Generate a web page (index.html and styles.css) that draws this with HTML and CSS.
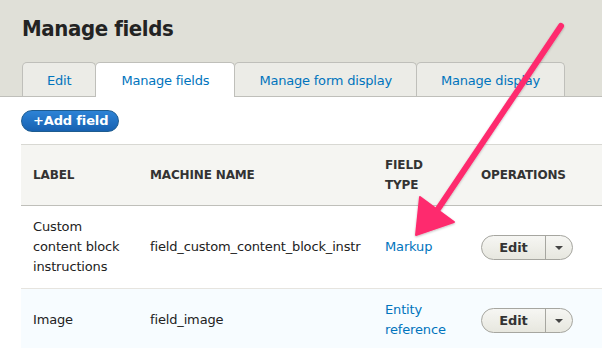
FILE: index.html
```html
<!DOCTYPE html>
<html lang="en">
<head>
    <meta charset="UTF-8">
    <meta name="viewport" content="width=device-width, initial-scale=1.0">
    <title>Manage fields</title>
    <link rel="stylesheet" href="styles.css">
</head>
<body>
    <div class="header">
        <h1>Manage fields</h1>
        <ul class="tabs">
            <li><a href="#">Edit</a></li>
            <li class="active"><a href="#">Manage fields</a></li>
            <li><a href="#">Manage form display</a></li>
            <li><a href="#">Manage display</a></li>
        </ul>
    </div>

    <div class="content">
        <a class="add-button" href="#">+Add field</a>

        <table class="fields">
            <colgroup>
                <col class="col-label">
                <col class="col-machine">
                <col class="col-type">
                <col class="col-ops">
            </colgroup>
            <thead>
                <tr>
                    <th>Label</th>
                    <th>Machine name</th>
                    <th>Field type</th>
                    <th>Operations</th>
                </tr>
            </thead>
            <tbody>
                <tr>
                    <td>Custom content block instructions</td>
                    <td class="nowrap">field_custom_content_block_instr</td>
                    <td><a href="#">Markup</a></td>
                    <td>
                        <div class="dropbutton">
                            <span class="drop-main">Edit</span>
                            <span class="drop-toggle"></span>
                        </div>
                    </td>
                </tr>
                <tr class="even">
                    <td>Image</td>
                    <td>field_image</td>
                    <td><a href="#">Entity reference</a></td>
                    <td>
                        <div class="dropbutton">
                            <span class="drop-main">Edit</span>
                            <span class="drop-toggle"></span>
                        </div>
                    </td>
                </tr>
            </tbody>
        </table>
    </div>

    <!-- annotation arrow -->
    <svg class="arrow" width="602" height="348" viewBox="0 0 602 348">
        <defs>
            <filter id="shadow" x="-20%" y="-20%" width="140%" height="140%">
                <feDropShadow dx="0" dy="1" stdDeviation="1" flood-color="#000" flood-opacity="0.25"/>
            </filter>
        </defs>
        <g filter="url(#shadow)" fill="#fe2c6e">
            <line x1="561" y1="26" x2="436" y2="212" stroke="#fe2c6e" stroke-width="6" stroke-linecap="round"/>
            <path d="M416 235 L420 197 L454 222 Z" stroke="#fe2c6e" stroke-width="2" stroke-linejoin="round"/>
        </g>
    </svg>
</body>
</html>
```

FILE: styles.css
```css
html, body {
    margin: 0;
    overflow: hidden;
}
body {
    font-family: "DejaVu Sans", "Lucida Grande", sans-serif;
    font-size: 13px;
    letter-spacing: -0.15px;
    color: #222;
    background: #fff;
    position: relative;
    width: 602px;
    height: 348px;
}
a {
    color: #0074bd;
    text-decoration: none;
}

.header {
    background: #e0e0d8;
    padding: 14px 0 0 22px;
    border-bottom: 1px solid #bfbfba;
}
.header h1 {
    margin: 0 0 18px;
    font-family: "DejaVu Sans Condensed", "Open Sans", sans-serif;
    font-size: 22px;
    line-height: 30px;
    font-weight: bold;
    color: #232323;
    letter-spacing: -0.4px;
}
.tabs {
    display: flex;
    list-style: none;
    margin: 0;
    padding: 0;
}
.tabs li {
    background: #ecece7;
    border: 1px solid #bfbfba;
    border-bottom: none;
    border-radius: 5px 5px 0 0;
    margin-right: -1px;
}
.tabs li a {
    display: block;
    height: 33px;
    line-height: 35px;
    padding: 0 24px;
    letter-spacing: -0.2px;
}
.tabs li.active {
    background: #fff;
    position: relative;
    z-index: 1;
    margin-bottom: -1px;
}
.tabs li.active a {
    height: 34px;
    padding: 0 25px;
}

.content {
    padding: 13px 0 0 21px;
}
.add-button {
    display: inline-block;
    height: 20px;
    line-height: 20px;
    padding: 0 10px 0 11px;
    border: 1px solid #1e5c90;
    border-radius: 11px;
    background: linear-gradient(#2d83d6, #1761b1);
    color: #fff;
    font-weight: bold;
    font-size: 13px;
}

.fields {
    margin-top: 12px;
    width: 581px;
    table-layout: fixed;
    border-collapse: collapse;
}
.col-label { width: 117px; }
.col-machine { width: 235px; }
.col-type { width: 96px; }
.col-ops { width: 133px; }
.fields th {
    background: #f5f5f2;
    border-top: 1px solid #d8d8d3;
    border-bottom: 1px solid #bfbfba;
    text-align: left;
    text-transform: uppercase;
    font-size: 12px;
    font-weight: bold;
    color: #333;
    line-height: 20px;
    padding: 10px 12px;
}
.fields td {
    padding: 11px 12px;
    line-height: 20px;
    border-bottom: 1px solid #e6e4df;
    vertical-align: middle;
}
.fields tr.even td {
    background: #f7fcff;
}
.nowrap {
    white-space: nowrap;
}

.dropbutton {
    display: flex;
    width: 90px;
    height: 23px;
    border: 1px solid #a6a6a0;
    border-radius: 13px;
    background: linear-gradient(#f6f6f3, #e7e7df);
    overflow: hidden;
}
.drop-main {
    flex: 1;
    text-align: center;
    font-weight: bold;
    line-height: 23px;
    color: #333;
}
.drop-toggle {
    width: 26px;
    border-left: 1px solid #a6a6a0;
    position: relative;
}
.drop-toggle::after {
    content: "";
    position: absolute;
    left: 9px;
    top: 10px;
    border-left: 4px solid transparent;
    border-right: 4px solid transparent;
    border-top: 4px solid #444;
}

.arrow {
    position: absolute;
    left: 0;
    top: 0;
    pointer-events: none;
}
```
